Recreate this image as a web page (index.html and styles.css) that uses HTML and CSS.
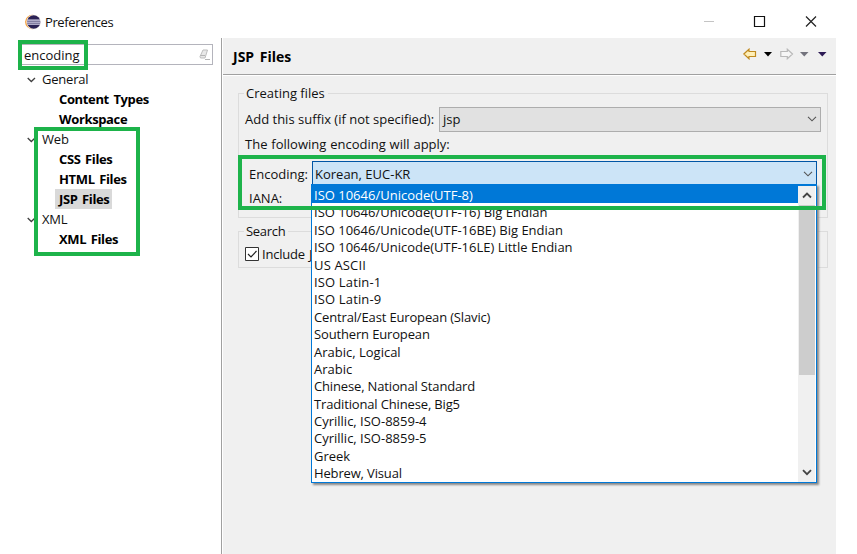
FILE: index.html
```html
<!DOCTYPE html>
<html lang="en">
<head>
<meta charset="utf-8">
<title>Preferences</title>
<link rel="stylesheet" href="styles.css">
</head>
<body>
<div class="window">
  <header class="titlebar">
    <svg class="logo" width="16" height="16" viewBox="0 0 16 16"><circle cx="7.3" cy="8" r="7.2" fill="#f39a2e"/><circle cx="8.6" cy="8" r="7.3" fill="#f6efe9"/><circle cx="8.7" cy="8" r="6.7" fill="#2c2255"/><path d="M2.2 6.1h13M1.8 8.1h13.8M2.2 10.1h13" stroke="#dcd9ee" stroke-width="1.1"/></svg>
    <span class="title">Preferences</span>
    <svg class="controls" width="116" height="14" viewBox="0 0 116 14"><path d="M0 6.500h10" stroke="#c4c4c4"/><path d="M50.500 1.500h10v10h-10z" fill="none" stroke="#111" stroke-width="1.2"/><path d="M102 1.500l10 10M112 1.500l-10 10" stroke="#222" stroke-width="1.2"/></svg>
  </header>
  <div class="body">
    <aside class="side">
      <div class="search"><span>encoding</span>
        <svg width="14" height="14" viewBox="0 0 14 14"><path d="M6 2h4.500L8 10H3.500L3 8.500z" fill="#e8e8e8" stroke="#bdbdbd"/><path d="M3.500 7.500H8M8 11.500h5" fill="none" stroke="#b4b4b4"/></svg>
      </div>
      <ul class="tree">
        <li class="branch"><svg class="chev" width="9" height="6" viewBox="0 0 9 6"><path d="M.7 1l3.600 3.500L8 1" /></svg>General</li>
        <li class="leaf"><span>Content Types</span></li>
        <li class="leaf"><span>Workspace</span></li>
        <li class="branch"><svg class="chev" width="9" height="6" viewBox="0 0 9 6"><path d="M.7 1l3.600 3.500L8 1" /></svg>Web</li>
        <li class="leaf"><span>CSS Files</span></li>
        <li class="leaf"><span>HTML Files</span></li>
        <li class="leaf selected"><span>JSP Files</span></li>
        <li class="branch"><svg class="chev" width="9" height="6" viewBox="0 0 9 6"><path d="M.7 1l3.600 3.500L8 1" /></svg>XML</li>
        <li class="leaf"><span>XML Files</span></li>
      </ul>
    </aside>
    <main class="page">
      <div class="pagehead">
        <h1>JSP Files</h1>
        <svg width="84" height="12" viewBox="0 0 84 12"><path d="M.8 6L6 1.200V3.500h6.500v5H6v2.300z" fill="#fff0b8" stroke="#c08a20" stroke-width="1.200"/><path d="M21 4h8l-4 4.500z" fill="#000"/><path d="M49.500 6L44.300 1.200V3.500h-6.500v5h6.500v2.300z" fill="#f6f6f6" stroke="#b9b9b9" stroke-width="1.200"/><path d="M57 4h8.500l-4.200 4.500z" fill="#73737d"/><path d="M75 4h8.500l-4.200 4.500z" fill="#2d1b55"/></svg>
      </div>
      <section class="group creating">
        <h2>Creating files</h2>
        <div class="row"><label class="suffix">Add this suffix (if not specified):</label>
          <div class="combo"><span>jsp</span><svg width="10" height="6" viewBox="0 0 10 6"><path d="M1 .8l4 4 4-4"/></svg></div></div>
        <div class="note">The following encoding will apply:</div>
        <div class="row enc"><label>Encoding:</label>
          <div class="combo open"><span>Korean, EUC-KR</span><svg width="10" height="6" viewBox="0 0 10 6"><path d="M1 .8l4 4 4-4"/></svg></div></div>
        <div class="iana">IANA:</div>
      </section>
      <section class="group find">
        <h2>Search</h2>
        <div class="row check"><svg width="14" height="14" viewBox="0 0 14 14"><path d="M.5.5h13v13H.5z" fill="#fff" stroke="#333"/><path d="M3 7l3 3 5.500-6" fill="none" stroke="#222" stroke-width="1.200"/></svg><span>Include J</span></div>
      </section>
    </main>
  </div>
  <div class="popup">
    <ul class="options">
      <li class="active">ISO 10646/Unicode(UTF-8)</li>
      <li>ISO 10646/Unicode(UTF-16) Big Endian</li>
      <li>ISO 10646/Unicode(UTF-16BE) Big Endian</li>
      <li>ISO 10646/Unicode(UTF-16LE) Little Endian</li>
      <li class="wide">US ASCII</li>
      <li class="wide">ISO Latin-1</li>
      <li class="wide">ISO Latin-9</li>
      <li class="tight">Central/East European (Slavic)</li>
      <li class="tight">Southern European</li>
      <li>Arabic, Logical</li>
      <li>Arabic</li>
      <li class="tight">Chinese, National Standard</li>
      <li class="tight">Traditional Chinese, Big5</li>
      <li>Cyrillic, ISO-8859-4</li>
      <li>Cyrillic, ISO-8859-5</li>
      <li>Greek</li>
      <li class="tight">Hebrew, Visual</li>
    </ul>
    <div class="scroll">
      <svg width="10" height="7" viewBox="0 0 10 7"><path d="M1 5.500l4-4 4 4"/></svg>
      <div class="thumb"></div>
      <svg width="10" height="7" viewBox="0 0 10 7"><path d="M1 1.200l4 4 4-4"/></svg>
    </div>
  </div>
  <div class="mark mark-search"></div>
  <div class="mark mark-tree"></div>
  <div class="mark mark-encoding"></div>
</div>
</body>
</html>
```
FILE: styles.css
```css
* { box-sizing: border-box; }
body { margin: 0; background: #fff; color: #111; font: 13px/20px "Open Sans", "Noto Sans", sans-serif; }
ul { list-style: none; margin: 0; padding: 0; }
h1, h2 { margin: 0; font-size: inherit; }
svg { flex: none; display: block; }
.window { position: relative; width: 857px; height: 554px; overflow: hidden; display: flex; flex-direction: column; }
.titlebar { height: 38px; padding: 6px 37px 0 25px; display: flex; align-items: center; }
.title { margin-left: 4px; letter-spacing: -0.38px; }
.controls { margin-left: auto; }
.body { flex: 1; display: flex; padding-right: 21px; }
.side { width: 223px; border-right: 1px solid #fff; box-shadow: inset -1px 0 #a0a0a0; padding: 6px 9px 0 18px; }
.search { height: 21px; border: 1px solid #b4b4bc; display: flex; align-items: center; justify-content: space-between; padding: 0 1px 0 5px; }
.tree { padding-top: 4px; }
.tree li { height: 20px; display: flex; align-items: center; }
.branch { padding-left: 9px; letter-spacing: -0.2px; }
.chev { margin-right: 6px; position: relative; top: 1px; }
.chev path { fill: none; stroke: #404040; stroke-width: 1.3; }
.leaf { padding-left: 37px; font-weight: 700; color: #000; letter-spacing: -0.36px; word-spacing: 1.5px; }
.leaf span { padding: 0 3px 0 4px; }
.selected span { background: #d9d9d9; }
.page { flex: 1; background: #f0f0f0; min-width: 0; }
.pagehead { height: 37px; border-bottom: 1px solid #a0a0a0; box-shadow: 0 1px #fff; display: flex; align-items: center; justify-content: space-between; padding: 0 9px 4px 10px; }
.pagehead h1 { font-weight: 700; font-size: 14px; padding-top: 5px; color: #000; word-spacing: 2px; }
.group { margin: 18px 8px 0 15px; border: 1px solid #dcdcdc; padding: 0 6px; }
.group h2 { font-weight: 400; width: max-content; background: #f0f0f0; margin-top: -10px; height: 19px; line-height: 19px; padding: 0 3px 0 2px; margin-left: -1px; }
.creating { height: 125px; }
.row { display: flex; align-items: center; }
.creating .row { height: 26px; margin-top: 3px; }
.suffix { width: 194px; white-space: nowrap; }
.combo { flex: 1; height: 25px; background: #e1e1e1; border: 1px solid #adadad; display: flex; align-items: center; justify-content: space-between; padding: 0 3px; }
.combo path { fill: none; stroke: #555; stroke-width: 1.1; }
.note { height: 23px; line-height: 24px; word-spacing: 0.5px; }
.creating .enc { height: 25px; margin: 6px 4px 0; }
.enc label { width: 63px; }
.combo.open { background: #cce4f7; border-color: #0055a5; padding-left: 2px; }
.iana { padding-left: 4px; line-height: 25px; }
.find { margin-top: 13px; height: 37px; }
.find h2 { letter-spacing: -0.3px; }
.check { height: 25px; gap: 3px; letter-spacing: -0.2px; word-spacing: 1px; white-space: nowrap; }
.popup { position: absolute; left: 311px; top: 184px; width: 506px; height: 299px; border: 1px solid #0078d7; border-top-width: 2px; background: #fff; display: flex; box-shadow: 2px 2px 2px #888; }
.options { flex: 1; }
.options li { height: 17.400px; line-height: 18px; padding-left: 2px; white-space: nowrap; }
.options .active { background: #0078d7; color: #fff; }
.options .tight { letter-spacing: -0.15px; }
.options .wide { letter-spacing: 0.15px; }
.scroll { width: 18px; background: #f0f0f0; border-right: 1px solid #fff; display: flex; flex-direction: column; align-items: center; padding: 6px 0; }
.scroll path { fill: none; stroke: #444; stroke-width: 1.800; }
.thumb { width: 16px; height: 170px; margin: 6px 0 auto; background: #cdcdcd; }
.mark { position: absolute; border: 4px solid #1db34a; }
.mark-search { left: 18px; top: 40px; width: 70px; height: 30px; }
.mark-tree { left: 34px; top: 127px; width: 106px; height: 129px; }
.mark-encoding { left: 238px; top: 155px; width: 588px; height: 55px; }
```
